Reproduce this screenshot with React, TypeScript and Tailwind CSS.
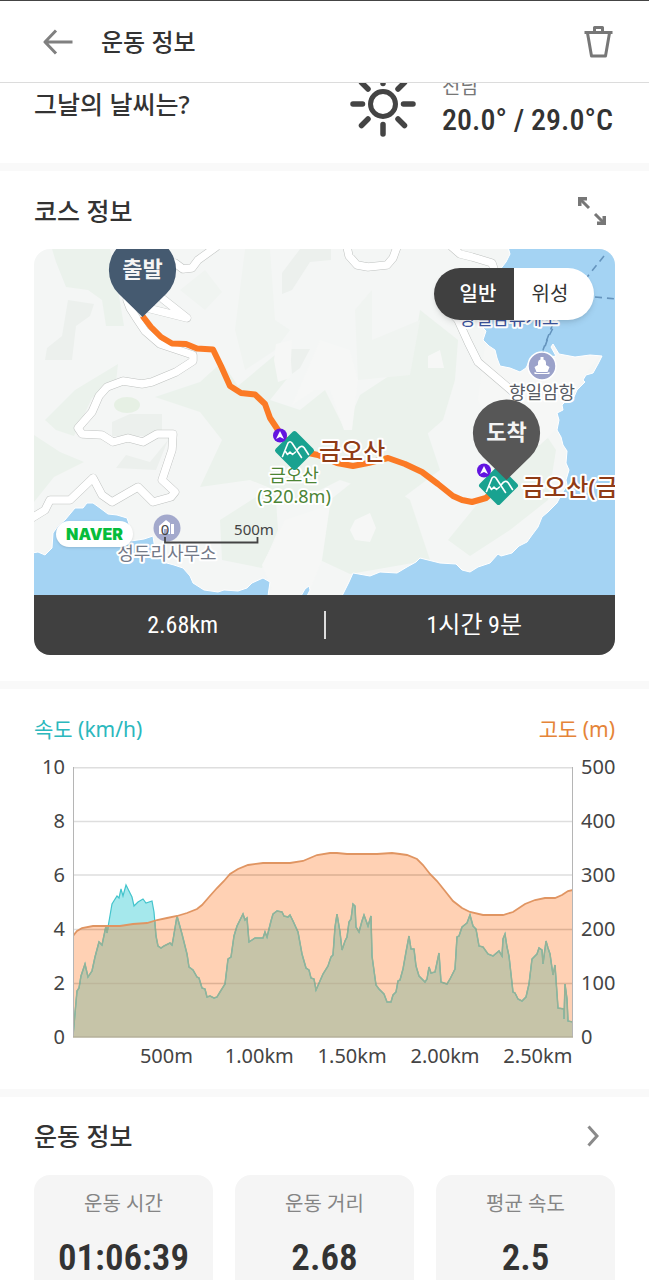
import React, { useState } from "react";

const KR = "font-['Noto_Sans','Noto_Sans_CJK_KR',sans-serif]";
const NARROW = "font-['Roboto_Condensed','Roboto','Noto_Sans_CJK_KR',sans-serif]";

const speedLine =
  "73,1037 77,992 79,989 81,977 85,965 88,978 92,972 95,958 99,943 102,946 106,927 107,934 112,905 117,897 119,899 121,890 123,897 126,886 130,894 132,898 134,907 138,903 143,900 146,904 152,902 154,913 156,937 158,947 161,949 164,947 170,944 172,946 173,941 177,917 182,935 187,955 189,968 193,971 197,978 199,979 202,989 205,990 207,998 210,997 214,999 217,998 220,993 225,985 228,960 231,958 234,937 237,927 243,915 245,921 247,919 249,943 255,939 263,939 265,933 267,938 271,922 273,915 277,912 282,913 284,917 288,918 290,916 293,922 298,933 302,955 306,969 309,971 311,979 314,980 316,991 323,975 328,967 331,958 333,956 335,928 337,915 340,933 342,951 345,942 347,938 349,923 351,920 353,905 355,907 356,928 359,933 362,922 364,916 368,927 371,917 372,957 376,986 379,990 384,995 387,1003 391,1003 393,996 396,993 398,982 400,981 403,970 406,953 409,937 411,950 414,950 416,967 419,977 425,983 427,980 429,968 431,974 435,973 439,954 441,983 447,985 450,980 455,970 457,938 459,937 462,928 467,924 470,916 473,927 476,930 479,947 483,948 488,955 493,957 499,952 502,957 503,940 505,935 507,948 509,957 513,993 515,994 518,1000 522,1002 526,998 529,985 532,960 537,955 539,949 542,951 543,965 546,942 548,949 550,955 553,976 555,966 558,1009 564,1010 564,1020 565,985 567,1000 568,1022 573,1023";

const altitudeLine =
  "73,937 77,932 82,929 93,927 107,927 120,927 133,925 147,924 157,921 167,919 177,917 187,914 197,910 202,906 209,898 217,889 224,882 230,875 238,870 248,866 263,864 290,864 303,862 310,859 317,856 330,854 337,854 347,855 377,855 392,854 400,855 407,856 417,860 423,866 430,875 437,882 445,892 453,902 462,909 470,913 483,916 503,916 513,913 525,905 535,901 545,899 555,899 562,896 568,892 573,891";

const winding =
  "M175 263 L183 269 L192 268 L198 260 L216 247 M163 299 L187 318 L147 308 M127 300 L130 308 L137 319 L145 331 L160 344 L178 350 L193 355 L193 361 L176 372 L152 382 L142 384 L123 381 L107 387 L99 396 L92 412 L78 428 L82 434 L102 435 L113 442 L128 438 L143 442 L157 434 L173 434 L172 450 L162 480 L175 492 L171 497 L153 502 L138 487 L112 502 L102 495 L93 478 L70 500 L50 500 L45 510 L32 518 M347 247 L349 256 L357 265 L368 267 L387 265 L393 258 L397 247 M452 247 L460 254 L472 257 L492 263 L496 275 M440 300 L458 320 L468 342 L478 362 L512 391";

function Halo(props: {
  x: number;
  y: number;
  size: number;
  color: string;
  weight?: number;
  anchor?: "start" | "middle";
  children: React.ReactNode;
}) {
  return (
    <text
      x={props.x}
      y={props.y}
      fontSize={props.size}
      fill={props.color}
      fontWeight={props.weight ?? 400}
      textAnchor={props.anchor ?? "middle"}
      stroke="#fff"
      strokeWidth="4"
      strokeLinejoin="round"
      paintOrder="stroke"
    >
      {props.children}
    </text>
  );
}

function Pin({ x, y, fill, label }: { x: number; y: number; fill: string; label: string }) {
  return (
    <g transform={`translate(${x} ${y})`}>
      <path d="M0 47 L-23.8 23.8 A33.6 33.6 0 1 1 23.8 23.8 Z" fill={fill} />
      <text y="7" fontSize="22" fontWeight="700" fill="#f4f4f4" textAnchor="middle">
        {label}
      </text>
    </g>
  );
}

function Peak({ x, y }: { x: number; y: number }) {
  return (
    <g transform={`translate(${x} ${y})`}>
      <rect x="-14.5" y="-14.5" width="29" height="29" rx="2.5" transform="rotate(45)" fill="#19a290" />
      <path
        d="M-12 6 L-6.500 -7.500 Q-4.500 -10 -2.500 -7.500 L7 7 M-9 1 L-7 4 L-4.500 1.500 L-2 4 L1 1.500 M3 -1 Q6.500 -6 9.500 -3 L14 4"
        fill="none"
        stroke="#fff"
        strokeWidth="1.6"
        strokeLinecap="round"
        strokeLinejoin="round"
      />
      <circle cx="-14.500" cy="-15" r="7" fill="#6215e0" />
      <path d="M-14.500 -19.500 L-10.500 -11.500 L-14.500 -13.500 L-18.500 -11.500 Z" fill="#fff" />
    </g>
  );
}

function CourseMap() {
  return (
    <svg viewBox="34 249 581 346" className={`block w-full ${KR}`} role="img" aria-label="코스 지도">
      <rect x="34" y="249" width="581" height="346" fill="#f4f6f5" />
      <g fill="#ebf2ec">
        <path d="M52 249 H110 L118 290 L124 326 L106 326 L102 300 L88 290 L66 287 L56 262 Z" />
        <path d="M45 420 L75 390 L118 364 L116 382 L92 398 L74 436 L56 430 Z" />
        <path d="M155 397 L200 382 L222 362 L238 386 L275 355 L290 375 L270 400 L300 410 L325 390 L345 430 L360 395 L395 372 L430 368 L434 400 L425 425 L440 470 L400 500 L340 480 L300 500 L250 480 L200 487 L222 440 L200 412 Z" />
        <path d="M34 435 L60 452 L84 462 L54 477 L34 502 Z" />
        <path d="M220 520 L275 485 L278 530 L262 568 L222 560 Z" />
        <path d="M330 500 L368 470 L410 500 L430 560 L350 574 L320 560 Z" />
        <path d="M420 310 L458 340 L455 380 L443 420 L420 440 L405 400 Z" />
        <path d="M505 470 L548 438 L556 450 L548 500 L510 530 L470 556 L448 540 Z" />
      </g>
      <g fill="#f0f4f1">
        <path d="M245 249 H270 L275 320 L290 330 L275 350 L245 370 L235 330 Z" />
        <path d="M355 310 L372 290 L372 340 L420 320 L410 375 L358 380 Z" />
        <path d="M180 290 L205 270 L222 292 L205 310 Z" />
      </g>
      <g fill="#ecf0ed">
        <path d="M68 300 L94 304 L90 316 L76 326 L72 360 L45 360 L47 348 L62 336 Z" />
        <path d="M282 273 L300 249 H331 V260 L310 262 L292 290 L282 294 Z" />
        <path d="M290 349 H310 L300 368 L292 374 Z" />
        <path d="M112 422 L130 414 H162 V436 H112 Z" />
        <path d="M126 455 L150 462 L168 440 L156 470 L116 468 Z" />
      </g>
      <ellipse cx="127" cy="405" rx="13" ry="8" fill="#e6f0e4" />
      <g fill="#f6f7f6">
        <path d="M276 344 L292 340 L290 378 L278 382 L274 360 Z" />
        <path d="M292 405 L315 390 L330 390 L344 430 L352 430 L358 380 L350 350 L320 340 Z" />
        <path d="M355 520 L370 513 L376 528 L370 542 L355 540 L350 530 Z" />
        <path d="M285 520 L330 505 L322 560 L310 590 L272 590 L262 565 Z" />
        <path d="M428 356 L440 350 L444 368 L428 368 Z" />
        <path d="M485 345 L602 352 L570 395 L560 425 L540 445 L500 440 L478 400 Z" />
      </g>
      <g fill="#a4d3f3" stroke="#fff" strokeWidth="1">
        <path d="M508 247 L510 254 L506 262 L488 285 L480 305 L483 315 L482 327 L486 331 L483 340 L489 346 L495 350 L497 358 L500 366 L510 368 L520 372 L526 368 L530 360 L556 356 L551 347 L553 344 L559 354 L575 357 L590 355 L602 356 L598 364 L593 373 L586 375 L583 380 L585 382 L577 390 L574 397 L566 401 L562 405 L563 410 L557 413 L559 420 L557 430 L561 437 L563 445 L567 451 L566 463 L569 470 L566 480 L567 485 L560 497 L557 503 L548 512 L542 517 L538 527 L532 535 L527 542 L519 546 L512 553 L501 556 L498 554 L490 563 L478 567 L470 572 L462 570 L456 564 L440 563 L420 558 L416 562 L407 567 L397 573 L380 572 L370 576 L353 573 L349 582 L342 596 H617 V247 Z" />
        <path d="M32 553 L38 552 L45 555 L52 548 L53 533 L58 526 L65 520 L75 508 L83 508 L87 503 L93 503 L100 508 L108 514 L117 515 L127 518 L131 530 L131 541 L144 539 L153 536 L155 550 L163 562 L174 565 L183 568 L190 576 L193 583 L204 590 L218 592 L224 590 L238 591 L247 588 L252 583 L263 578 L270 582 L268 596 H32 Z" />
        <path d="M301 596 L305 589 L309 586 L310 590 L307 596 Z" />
      </g>
      <g fill="none" stroke="#6594bd" strokeWidth="1.6" strokeDasharray="7 5">
        <path d="M604 256 L575 292 L552 326 L543 350" />
        <path d="M595 297 L616 299" />
        <path d="M558 318 L548 338 L543 352" />
      </g>
      <path d={winding} fill="none" stroke="#bfc2c0" strokeWidth="8.500" strokeLinejoin="round" strokeLinecap="round" />
      <path d={winding} fill="none" stroke="#fff" strokeWidth="7.500" strokeLinejoin="round" strokeLinecap="round" />
      <Halo x={509} y={325} size={18} color="#3c559f">향일암휴게소</Halo>
      <Halo x={542} y={399} size={18} color="#565b63">향일암항</Halo>
      <g transform="translate(542 366)">
        <circle r="14" fill="#9ba2ca" stroke="#fff" strokeWidth="1.500" />
        <path d="M-1.500 -9 H1.500 V-6.500 Q4 -6 4 -3.500 V-1 L7.500 1 L5.500 6 H-5.500 L-7.500 1 L-4 -1 V-3.500 Q-4 -6 -1.500 -6.500 Z M-7.500 6 L-5 7 H5 L7.500 6 V8 H-7.500 Z" fill="#fff" />
      </g>
      <circle cx="167" cy="528" r="13.500" fill="#a3a9cc" />
      <path d="M159 534 V526 L166 520 L170 523 V534 H167 V529 H164 V534 Z M171 524 H174 V534 H171 Z" fill="#fff" />
      <path
        d="M142.500 316 L151 327 L161 337 L172 343.500 L186 344 L197 348.500 L213 349.500 L221 366 L230 386 L241 393 L255 394.500 L265 404 L270 418 L278 430 L294 450 L318 455 L337 463 L353 466 L368 463 L388 458 L405 464 L422 472 L438 484 L453 496 L462 500 L472 502 L486 498 L498 487"
        fill="none"
        stroke="#fb7a25"
        strokeWidth="6"
        strokeLinejoin="round"
      />
      <Halo x={294} y={482} size={18} color="#4c8535">금오산</Halo>
      <Halo x={294} y={503} size={18} color="#4c8535">(320.8m)</Halo>
      <Halo x={167} y={560} size={18} color="#747a88">성두리사무소</Halo>
      <Halo x={319} y={460} size={24} color="#903b15" weight={500} anchor="start">금오산</Halo>
      <Halo x={522} y={496} size={24} color="#903b15" weight={500} anchor="start">금오산(금오산)</Halo>
      <Peak x={294.5} y={450.500} />
      <Peak x={498.5} y={485.5} />
      <Pin x={142.5} y={270} fill="#455a70" label="출발" />
      <Pin x={506.5} y={433} fill="#575757" label="도착" />
      <g fill="#444" fontSize="15">
        <text x="165" y="535" textAnchor="middle">0</text>
        <text x="254" y="535" textAnchor="middle">500m</text>
        <path d="M165 537 V542.5 H257.500 V537" fill="none" stroke="#444" strokeWidth="1.8" />
      </g>
    </svg>
  );
}

function Divider() {
  return <div className="h-2 shrink-0 bg-[#f9f9f9]" />;
}

function Stat({ label, value }: { label: string; value: string }) {
  return (
    <div className="flex flex-1 flex-col items-center gap-4 rounded-2xl bg-[#f5f5f5] pt-[15px] pb-6">
      <dt className="text-[20px] leading-7 text-[#858585]">{label}</dt>
      <dd className={`text-[37px] leading-12 font-semibold text-[#333] ${NARROW}`}>{value}</dd>
    </div>
  );
}

export default function App() {
  const [mode, setMode] = useState("일반");
  return (
    <div className={`flex h-screen flex-col overflow-hidden bg-white text-[#333] ${KR}`}>
      <header className="flex h-[83px] shrink-0 items-center border-t border-b border-t-[#444] border-b-[#dcdcdc] pr-9 pl-[43px]">
        <button aria-label="뒤로" className="mr-7">
          <svg width="30" height="26" viewBox="0 0 30 26" fill="none" stroke="#808080" strokeWidth="3">
            <path d="M2 13 H29.500 M13 1.500 L2 13 L13 24.500" strokeLinejoin="round" />
          </svg>
        </button>
        <h1 className="flex-1 text-[24px] leading-9 font-medium">운동 정보</h1>
        <button aria-label="삭제">
          <svg width="29" height="33" viewBox="0 0 29 33" fill="none" stroke="#777" strokeWidth="3">
            <path d="M0.500 7.500 H28.500 M10.500 7 V2.500 H18.500 V7 M3.500 8 L7.500 31 H21.500 L25.500 8" strokeLinejoin="round" />
          </svg>
        </button>
      </header>

      <main className="flex-1 overflow-hidden">
        <section className="flex h-20 items-end overflow-hidden px-9 pb-[26px] pl-[34px]">
          <div className="flex h-[66px] flex-1 items-center">
            <h2 className="flex-1 text-[25px] leading-9 font-medium">그날의 날씨는?</h2>
            <svg className="mr-[26px]" width="66" height="66" viewBox="-33 -33 66 66" fill="none" stroke="#444" strokeLinecap="round">
              <circle r="12.500" strokeWidth="5" />
              <path
                d="M-30 0 H-20.500 M20.500 0 H30 M0 -30 V-20.500 M0 20.500 V30 M-21.500 -21.500 L-15 -15 M21.500 21.500 L15 15 M-21.500 21.500 L-15 15 M21.500 -21.500 L15 -15"
                strokeWidth="5.500"
              />
            </svg>
            <div className="pt-1">
              <p className="text-[20px] leading-7 text-[#777]">전남</p>
              <p className={`text-[30px] leading-[38px] font-medium ${NARROW}`}>20.0° / 29.0°C</p>
            </div>
          </div>
        </section>
        <Divider />

        <section className="px-[34px] pt-[22px] pb-[26px]">
          <div className="mb-5 flex items-center justify-between pr-2">
            <h2 className="text-[25px] leading-9 font-medium">코스 정보</h2>
            <button aria-label="지도 확대">
              <svg width="30" height="30" viewBox="0 0 30 30" fill="none" stroke="#777" strokeWidth="3">
                <path d="M3 3 L12 12 M18 18 L27 27" />
                <path d="M1 1 H10 V4.500 H6 L4.500 6 V10 H1 Z M29 29 H20 V25.500 H24 L25.500 24 V20 H29 Z" fill="#777" stroke="none" />
              </svg>
            </button>
          </div>
          <div className="overflow-hidden rounded-2xl">
            <div className="relative">
              <CourseMap />
              <div className="absolute top-[19px] right-[21px] flex h-13 w-40 overflow-hidden rounded-full bg-white text-[20px] shadow-md">
                <button
                  aria-pressed={mode === "일반"}
                  onClick={() => setMode("일반")}
                  className="flex-1 bg-[#404040] pl-2 font-medium text-white"
                >
                  일반
                </button>
                <button aria-pressed={mode === "위성"} onClick={() => setMode("위성")} className="flex-1 pr-2">
                  위성
                </button>
              </div>
              <span className="absolute bottom-12 left-[22px] flex h-[26px] w-[77px] items-center justify-center rounded-full bg-white font-['Inter',sans-serif] text-[16px] font-black text-[#06bd3c] shadow-sm">
                NAVER
              </span>
            </div>
            <div className={`flex h-[60px] items-center bg-[#404040] text-center text-[24px] text-white ${NARROW}`}>
              <span className="flex-1 pl-2">2.68km</span>
              <span className="h-7 w-0.5 bg-[#ddd]" />
              <span className="flex-1 pl-2">1시간 9분</span>
            </div>
          </div>
        </section>
        <Divider />

        <section className="px-[34px] pt-[26px] pb-[19px]">
          <div className="mb-6 flex justify-between text-[21px] leading-7">
            <span className="text-[#2bb8bd]">속도 (km/h)</span>
            <span className="text-[#e58438]">고도 (m)</span>
          </div>
          <div className="flex text-[20px] leading-5 text-[#444]">
            <div className="-mt-[10px] mr-2 flex h-[290px] w-[31px] flex-col justify-between text-right">
              {[10, 8, 6, 4, 2, 0].map((v) => (
                <span key={v}>{v}</span>
              ))}
            </div>
            <div className="min-w-0 flex-1">
              <svg viewBox="73 768 500 271" preserveAspectRatio="none" className="block h-[271px] w-full" role="img" aria-label="속도와 고도 그래프">
                <g stroke="#dedede" strokeWidth="1.5">
                  {[768.75, 822.5, 876, 930.5, 984.5].map((y) => (
                    <path key={y} d={`M73 ${y} H573`} />
                  ))}
                </g>
                <polygon points={`73,1038 ${speedLine} 573,1038`} fill="#a5e8ec" />
                <polygon points={`73,1038 ${altitudeLine} 573,1038`} fill="#ff914d" fillOpacity="0.42" />
                <clipPath id="under-altitude">
                  <polygon points={`73,1038 ${altitudeLine} 573,1038`} />
                </clipPath>
                <g clipPath="url(#under-altitude)">
                  <polygon points={`73,1038 ${speedLine} 573,1038`} fill="#c6c4a8" />
                </g>
                <polyline points={speedLine} fill="none" stroke="#43c4cc" strokeWidth="1.2" />
                <polyline points={speedLine} fill="none" stroke="#94b297" strokeWidth="1.5" clipPath="url(#under-altitude)" />
                <polyline points={altitudeLine} fill="none" stroke="#e09562" strokeWidth="1.8" />
                <g stroke="#8a6a50" strokeOpacity="0.15" strokeWidth="1.5" clipPath="url(#under-altitude)">
                  <path d="M73 876 H573 M73 930.5 H573 M73 984.5 H573" />
                </g>
                <path d="M73.5 768 V1038 M572.5 768 V1038" stroke="#b5b5b5" />
                <path d="M73 1038 H573" stroke="#b5b09a" strokeWidth="1.5" />
              </svg>
              <div className="mt-1 flex pl-[9.4%] text-center leading-7">
                {["500m", "1.00km", "1.50km", "2.00km", "2.50km"].map((v) => (
                  <span key={v} className="w-[20.5%] shrink-0">
                    {v}
                  </span>
                ))}
              </div>
            </div>
            <div className="-mt-[10px] ml-2 flex h-[290px] w-[34px] flex-col justify-between">
              {[500, 400, 300, 200, 100, 0].map((v) => (
                <span key={v}>{v}</span>
              ))}
            </div>
          </div>
        </section>
        <Divider />

        <section className="px-[34px] pt-[21px]">
          <div className="mb-[21px] flex items-center justify-between pr-4">
            <h2 className="text-[25px] leading-9 font-medium">운동 정보</h2>
            <button aria-label="운동 정보 더보기">
              <svg width="12" height="22" viewBox="0 0 12 22" fill="none" stroke="#8a8a8a" strokeWidth="3">
                <path d="M1.500 1.500 L10 11 L1.500 20.500" />
              </svg>
            </button>
          </div>
          <dl className="flex gap-[22px]">
            <Stat label="운동 시간" value="01:06:39" />
            <Stat label="운동 거리" value="2.68" />
            <Stat label="평균 속도" value="2.5" />
          </dl>
        </section>
      </main>
    </div>
  );
}
